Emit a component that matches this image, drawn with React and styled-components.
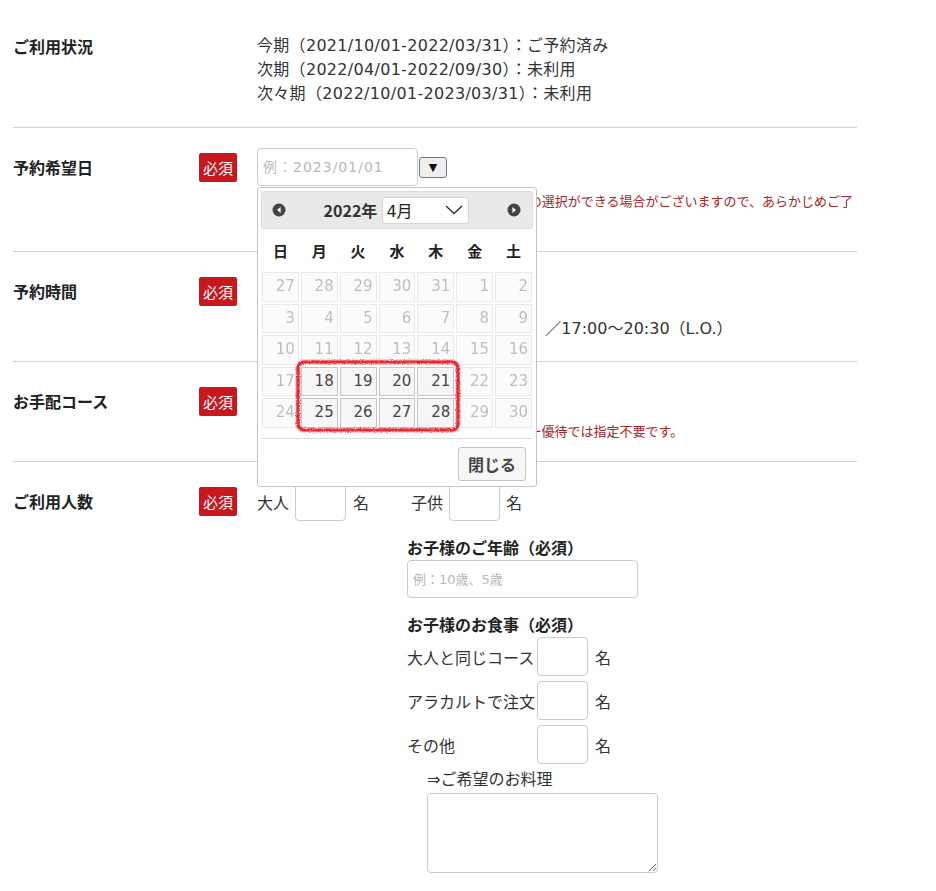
import React from "react";
import styled, { createGlobalStyle } from "styled-components";

const Global = createGlobalStyle`
  html, body { margin: 0; padding: 0; background: #fff; }
  body {
    font-family: "DejaVu Sans", "Noto Sans CJK JP", sans-serif;
    font-size: 16px;
    color: #333;
  }
  * { box-sizing: border-box; }
`;

const Page = styled.div`
  margin-left: 13px;
  width: 844px;
  padding-top: 14px;
`;

const Row = styled.div`
  display: grid;
  grid-template-columns: 186px 58px 600px;
  padding: 20px 0 ${(p) => (p.$pb ? p.$pb : 20)}px;
  border-bottom: ${(p) => (p.$last ? "none" : "1px solid #d2d2d2")};
`;

const Label = styled.div`
  font-family: "Noto Sans CJK JP", sans-serif;
  font-weight: bold;
  font-size: 16px;
  line-height: 24px;
  color: #222;
  margin-top: ${(p) => p.$mt || 0}px;
`;

const Badge = styled.div`
  width: 38px;
  height: 29px;
  margin-top: 5px;
  background: #c9171e;
  border-radius: 2px;
  color: #fff;
  font-family: "Noto Sans CJK JP", sans-serif;
  font-size: 15px;
  line-height: 29px;
  text-align: center;
`;

const Content = styled.div`
  display: flex;
  flex-direction: column;
  align-items: flex-start;
  min-width: 0;
`;

const Line = styled.div`
  line-height: 24px;
  white-space: nowrap;
  letter-spacing: 0.3px;
`;

const DateField = styled.div`
  position: relative;
  display: flex;
  align-items: center;
  gap: 1px;
`;

const TextInput = styled.input`
  width: ${(p) => p.$w}px;
  height: ${(p) => p.$h || 38}px;
  border: 1px solid #ccc;
  border-radius: 4px;
  padding: 0 5px;
  font-family: "DejaVu Sans", "Noto Sans CJK JP", sans-serif;
  font-size: ${(p) => p.$fs || 14}px;
  letter-spacing: ${(p) => p.$ls || 0}px;
  color: #333;
  background: #fff;
  outline: none;
  &::placeholder { color: #b8b8b8; }
`;

const DropButton = styled.button`
  width: 28px;
  height: 21px;
  padding: 0;
  border: 1px solid #767676;
  border-radius: 3px;
  background: #efefef;
  color: #111;
  font-size: 11px;
  line-height: 19px;
  font-family: "DejaVu Sans", sans-serif;
`;

const Note = styled.div`
  font-family: "Noto Sans CJK JP", sans-serif;
  font-size: 13px;
  line-height: 20px;
  color: #a8232a;
  width: 600px;
  margin-top: ${(p) => p.$mt || 0}px;
`;

const FakeSelect = styled.div`
  width: 220px;
  height: 38px;
  border: 1px solid #ccc;
  border-radius: 4px;
  background: #fff;
`;

const TimeLine = styled.div`
  line-height: 24px;
  margin-top: 7px;
  white-space: nowrap;
`;

const People = styled.div`
  display: flex;
  align-items: center;
  line-height: 24px;
`;

const Unit = styled.span`
  margin: 0 ${(p) => p.$mr || 0}px 0 ${(p) => p.$ml || 0}px;
  font-family: "Noto Sans CJK JP", sans-serif;
`;

const SubBlock = styled.div`
  margin-left: 150px;
  display: flex;
  flex-direction: column;
  align-items: flex-start;
`;

const SubHeading = styled.div`
  font-family: "Noto Sans CJK JP", sans-serif;
  font-weight: bold;
  font-size: 16px;
  line-height: 24px;
  color: #222;
  margin-top: ${(p) => p.$mt}px;
  margin-bottom: 1px;
`;

const MealRow = styled.div`
  display: flex;
  align-items: center;
  margin-bottom: 5px;
`;

const MealLabel = styled.span`
  width: 130px;
  font-family: "Noto Sans CJK JP", sans-serif;
  line-height: 24px;
`;

const WishLabel = styled.div`
  margin: -1px 0 1px 20px;
  line-height: 24px;
  font-family: "DejaVu Sans", "Noto Sans CJK JP", sans-serif;
`;

const TextArea = styled.textarea`
  margin-left: 20px;
  width: 231px;
  height: 80px;
  border: 1px solid #ccc;
  border-radius: 4px;
  resize: both;
  outline: none;
`;

/* ---------- calendar ---------- */

const Popup = styled.div`
  position: absolute;
  top: 39px;
  left: 0;
  width: 280px;
  padding: 3px;
  background: #fff;
  border: 1px solid #c5c5c5;
  border-radius: 3px;
  z-index: 5;
`;

const CalHeader = styled.div`
  height: 38px;
  background: #e9e9e9;
  border: 1px solid #ddd;
  border-radius: 3px;
  display: flex;
  align-items: center;
  justify-content: space-between;
  padding: 0 11px 0 10px;
`;

const Title = styled.div`
  display: flex;
  align-items: center;
  gap: 5px;
`;

const Year = styled.span`
  font-family: "Noto Sans CJK JP", sans-serif;
  font-weight: bold;
  font-size: 16px;
  color: #333;
`;

const MonthSelect = styled.div`
  width: 87px;
  height: 27px;
  background: #fff;
  border: 1px solid #d6d6d6;
  border-radius: 3px;
  display: flex;
  align-items: center;
  justify-content: space-between;
  padding: 0 5px 0 3px;
  font-family: "DejaVu Sans", "Noto Sans CJK JP", sans-serif;
  font-size: 16px;
  color: #222;
`;

const Table = styled.table`
  width: 100%;
  border-collapse: separate;
  border-spacing: 0;
  table-layout: fixed;
`;

const Th = styled.th`
  height: 42px;
  padding: 0;
  font-family: "Noto Sans CJK JP", sans-serif;
  font-weight: bold;
  font-size: 15px;
  color: #222;
  text-align: center;
`;

const Td = styled.td`
  padding: 1px;
`;

const Day = styled.span`
  display: block;
  height: 29.5px;
  border: 1px solid #c5c5c5;
  background: #f6f6f6;
  color: #454545;
  text-align: right;
  padding: 0 3px;
  font-family: "DejaVu Sans", sans-serif;
  font-size: 15px;
  line-height: 27.5px;
  opacity: ${(p) => (p.$active ? 1 : 0.35)};
`;

const ButtonPane = styled.div`
  margin-top: 9px;
  border-top: 1px solid #ddd;
  display: flex;
  justify-content: flex-end;
  padding: 8px 7px 2px 0;
`;

const CloseButton = styled.button`
  height: 34px;
  padding: 0 9px;
  border: 1px solid #c5c5c5;
  border-radius: 3px;
  background: #f6f6f6;
  color: #454545;
  font-family: "Noto Sans CJK JP", sans-serif;
  font-weight: bold;
  font-size: 16px;
`;

const Highlight = styled.svg`
  position: absolute;
  left: 35px;
  top: 169px;
  pointer-events: none;
`;

const NavIcon = ({ dir }) => (
  <svg width="14" height="14" viewBox="0 0 14 14">
    <circle cx="7" cy="7" r="6.5" fill="#444" />
    {dir === "prev" ? (
      <path d="M8.6 4 L5 7 L8.6 10 Z" fill="#fff" />
    ) : (
      <path d="M5.4 4 L9 7 L5.4 10 Z" fill="#fff" />
    )}
  </svg>
);

const weeks = [
  [27, 28, 29, 30, 31, 1, 2].map((d) => [d, false]),
  [3, 4, 5, 6, 7, 8, 9].map((d) => [d, false]),
  [10, 11, 12, 13, 14, 15, 16].map((d) => [d, false]),
  [17, 18, 19, 20, 21, 22, 23].map((d) => [d, d >= 18 && d <= 21]),
  [24, 25, 26, 27, 28, 29, 30].map((d) => [d, d >= 25 && d <= 28]),
];

const Calendar = () => (
  <Popup>
    <CalHeader>
      <NavIcon dir="prev" />
      <Title>
        <Year>2022年</Year>
        <MonthSelect>
          <span>4月</span>
          <svg width="18" height="10" viewBox="0 0 18 10">
            <polyline points="1,1 9,8.5 17,1" fill="none" stroke="#333" strokeWidth="1.4" />
          </svg>
        </MonthSelect>
      </Title>
      <NavIcon dir="next" />
    </CalHeader>
    <Table>
      <thead>
        <tr>
          {["日", "月", "火", "水", "木", "金", "土"].map((w) => (
            <Th key={w}>{w}</Th>
          ))}
        </tr>
      </thead>
      <tbody>
        {weeks.map((wk, i) => (
          <tr key={i}>
            {wk.map(([d, a]) => (
              <Td key={d}>
                <Day $active={a}>{d}</Day>
              </Td>
            ))}
          </tr>
        ))}
      </tbody>
    </Table>
    <ButtonPane>
      <CloseButton>閉じる</CloseButton>
    </ButtonPane>
    <Highlight width="172" height="79" viewBox="0 0 172 79">
      <defs>
        <filter id="rough" x="-10%" y="-10%" width="120%" height="120%">
          <feTurbulence type="fractalNoise" baseFrequency="0.8" numOctaves="2" seed="3" />
          <feDisplacementMap in="SourceGraphic" scale="3" />
        </filter>
      </defs>
      <rect x="5" y="5" width="160" height="68" rx="6" fill="none" stroke="#f08a90" strokeWidth="5.5" opacity="0.55" filter="url(#rough)" />
      <rect x="5" y="5" width="160" height="68" rx="6" fill="none" stroke="#e42b36" strokeWidth="3.2" filter="url(#rough)" />
    </Highlight>
  </Popup>
);

export default function App() {
  return (
    <>
      <Global />
      <Page>
        <Row $pb={21}>
          <Label>ご利用状況</Label>
          <div />
          <Content>
            <Line>今期（2021/10/01-2022/03/31）：ご予約済み</Line>
            <Line>次期（2022/04/01-2022/09/30）：未利用</Line>
            <Line>次々期（2022/10/01-2023/03/31）：未利用</Line>
          </Content>
        </Row>

        <Row>
          <Label $mt={7}>予約希望日</Label>
          <Badge>必須</Badge>
          <Content>
            <DateField>
              <TextInput $w={161} $fs={14} $ls={1} placeholder="例：2023/01/01" />
              <DropButton>▼</DropButton>
              <Calendar />
            </DateField>
            <Note $mt={5}>
              ※ご予約状況により、表示されている日付以外の選択ができる場合がございますので、あらかじめご了承ください。
            </Note>
          </Content>
        </Row>

        <Row>
          <Label $mt={7}>予約時間</Label>
          <Badge>必須</Badge>
          <Content>
            <FakeSelect />
            <TimeLine>ランチ営業時間 11:30〜14:00（L.O.）／17:00〜20:30（L.O.）</TimeLine>
          </Content>
        </Row>

        <Row>
          <Label $mt={7}>お手配コース</Label>
          <Badge>必須</Badge>
          <Content>
            <FakeSelect />
            <Note $mt={1}>※お好きなコースを選択してください。メンバー優待では指定不要です。</Note>
          </Content>
        </Row>

        <Row $last>
          <Label $mt={7}>ご利用人数</Label>
          <Badge>必須</Badge>
          <Content>
            <People>
              <Unit $mr={6}>大人</Unit>
              <TextInput $w={51} $h={39} />
              <Unit $ml={7} $mr={42}>名</Unit>
              <Unit $mr={6}>子供</Unit>
              <TextInput $w={51} $h={39} />
              <Unit $ml={6}>名</Unit>
            </People>
            <SubBlock>
              <SubHeading $mt={14}>お子様のご年齢（必須）</SubHeading>
              <TextInput $w={231} $fs={13} placeholder="例：10歳、5歳" />
              <SubHeading $mt={14}>お子様のお食事（必須）</SubHeading>
              <MealRow>
                <MealLabel>大人と同じコース</MealLabel>
                <TextInput $w={51} $h={39} />
                <Unit $ml={7}>名</Unit>
              </MealRow>
              <MealRow>
                <MealLabel>アラカルトで注文</MealLabel>
                <TextInput $w={51} $h={39} />
                <Unit $ml={7}>名</Unit>
              </MealRow>
              <MealRow>
                <MealLabel>その他</MealLabel>
                <TextInput $w={51} $h={39} />
                <Unit $ml={7}>名</Unit>
              </MealRow>
              <WishLabel>⇒ご希望のお料理</WishLabel>
              <TextArea />
            </SubBlock>
          </Content>
        </Row>
      </Page>
    </>
  );
}
